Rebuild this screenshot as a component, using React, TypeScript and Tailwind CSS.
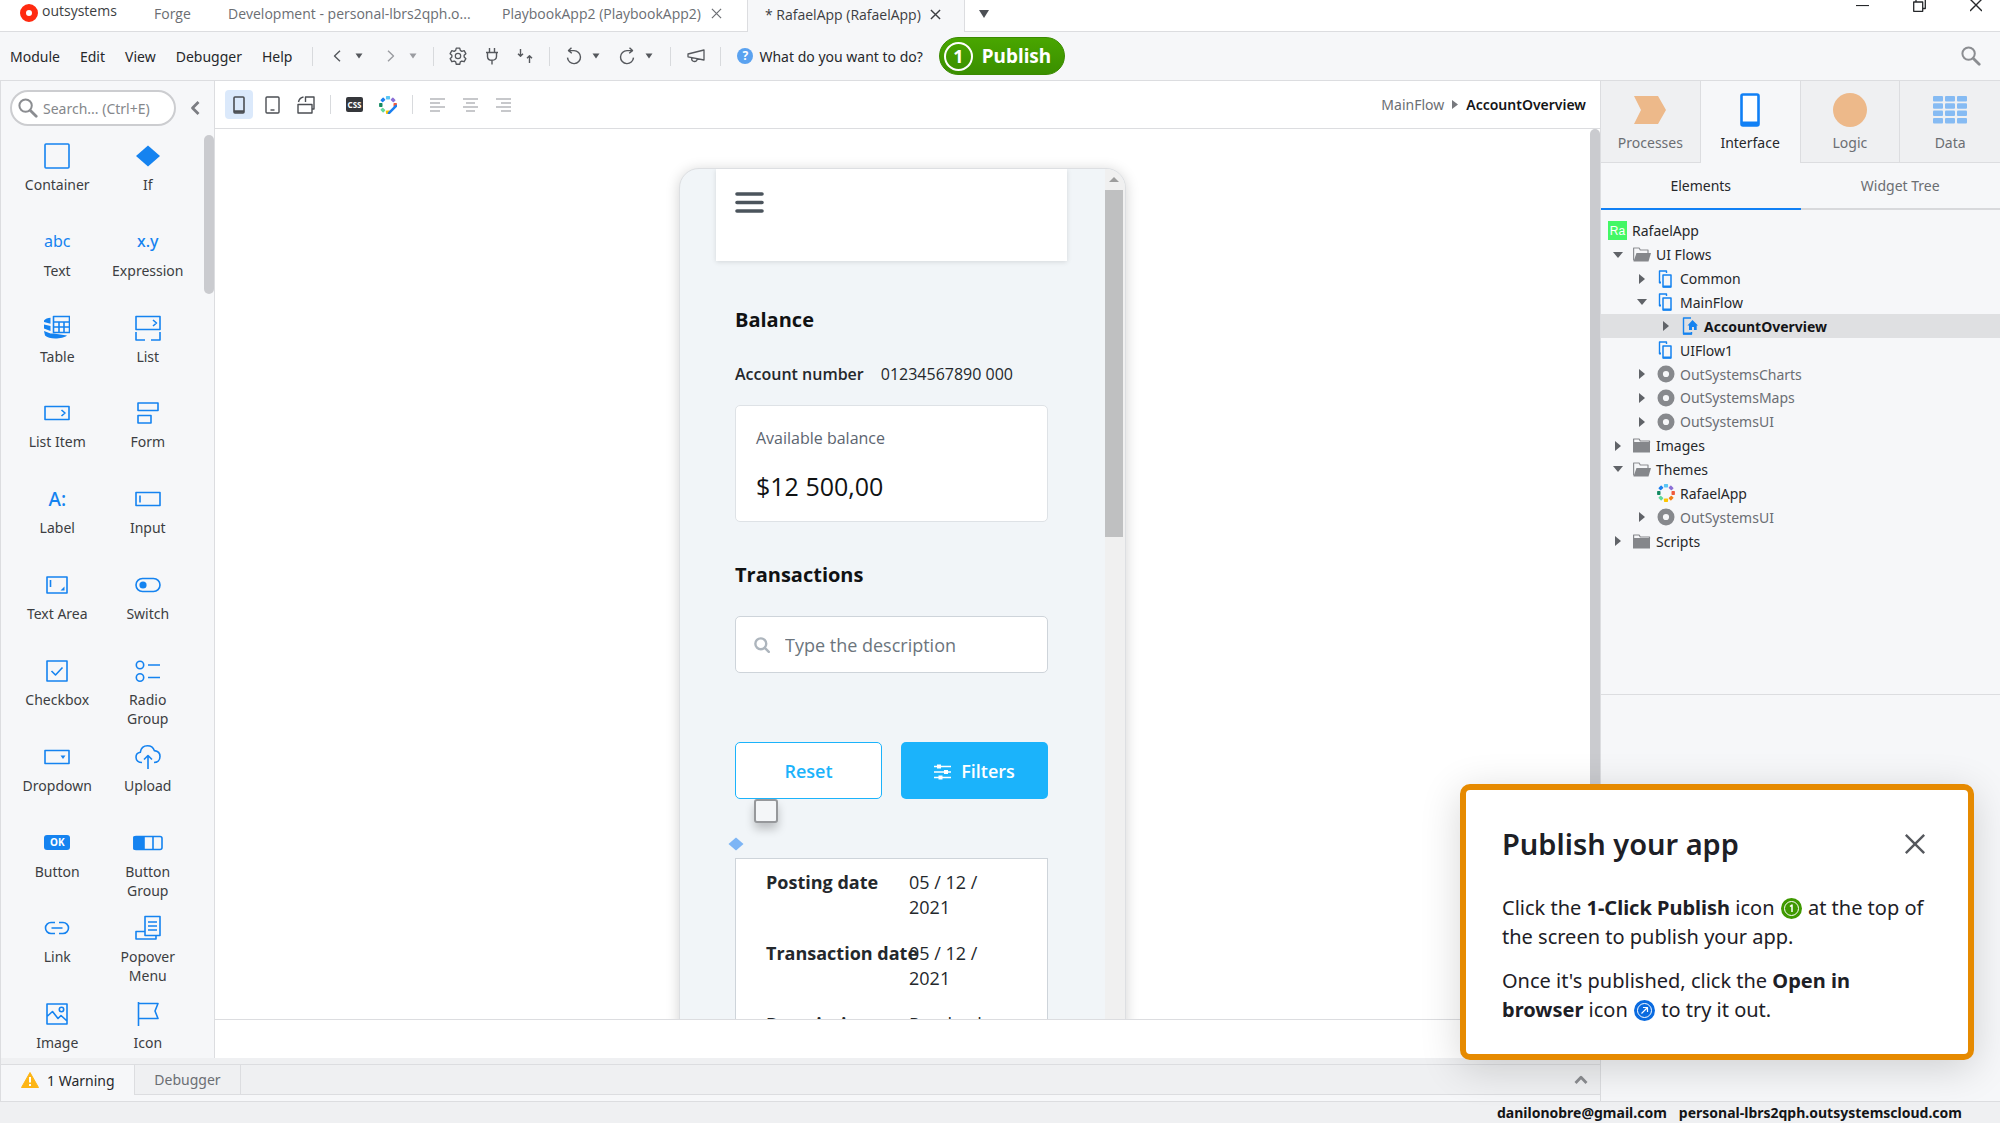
import type { ReactNode } from "react";

const BLUE = "#1583f0";

function Svg({
  w = 26,
  h = 26,
  box,
  className,
  children,
}: {
  w?: number;
  h?: number;
  box?: string;
  className?: string;
  children: ReactNode;
}) {
  return (
    <svg
      width={w}
      height={h}
      viewBox={box ?? `0 0 ${w} ${h}`}
      fill="none"
      stroke="currentColor"
      strokeWidth="1.6"
      strokeLinejoin="round"
      aria-hidden="true"
      className={className ? `shrink-0 ${className}` : "shrink-0"}
    >
      {children}
    </svg>
  );
}

/* ---------- small shared glyphs ---------- */

const Cross = ({ size, stroke }: { size: number; stroke: number }) => (
  <Svg w={size} h={size} box="0 0 12 12">
    <path d="M1 1l10 10M11 1L1 11" strokeWidth={stroke} vectorEffect="non-scaling-stroke" />
  </Svg>
);

const CaretDown = ({ className }: { className?: string }) => (
  <Svg w={8} h={6} className={className}>
    <path d="M.5 .5h7L4 5.5z" fill="currentColor" stroke="none" />
  </Svg>
);

const Magnifier = ({ size = 20 }: { size?: number }) => (
  <Svg w={size} h={size} box="0 0 20 20">
    <circle cx="7.6" cy="7.6" r="6.2" strokeWidth="2" />
    <path d="M12.4 12.4l5.8 5.8" strokeWidth="2.8" strokeLinecap="round" />
  </Svg>
);

const Divider = ({ className = "" }: { className?: string }) => (
  <span className={`h-[19px] w-px shrink-0 bg-[#d8dadd] ${className}`} />
);

const ringColors = ["#59c6f5", "#8b6fd6", "#ef5a3c", "#f08018", "#fdc500", "#62d99b", "#128a62", "#1a7ff0"];

function ThemeRing({ size = 18, brush = false }: { size?: number; brush?: boolean }) {
  const shown = brush ? ringColors.filter((_, i) => i !== 3) : ringColors;
  return (
    <Svg w={size} h={size} box="0 0 20 20">
      {shown.map((c) => {
        const a = (ringColors.indexOf(c) * Math.PI) / 4 - Math.PI / 2;
        return (
          <rect
            key={c}
            x={-2.3}
            y={-1.9}
            width="4.6"
            height="3.8"
            rx="0.8"
            fill={c}
            stroke="none"
            transform={`translate(${10 + 8 * Math.cos(a)} ${10 + 8 * Math.sin(a)}) rotate(${(a * 180) / Math.PI + 90})`}
          />
        );
      })}
      {brush && <path d="M11 19l8-8" stroke="#1a7ff0" strokeWidth="2.8" strokeLinecap="round" />}
    </Svg>
  );
}

/* ---------- title bar ---------- */

function TitleBar() {
  return (
    <header className="flex h-8 shrink-0 items-stretch whitespace-nowrap bg-white font-['Open_Sans'] text-[14px] text-[#6b6e73]">
      <div className="flex min-w-[747px] shrink-0 items-center border-b border-[#dcdde0] pb-1 pl-5">
        <Svg w={18} h={18} className="mb-0.5">
          <circle cx="9" cy="9" r="6" stroke="#ff2a10" strokeWidth="6" />
        </Svg>
        <span className="mb-1.5 ml-1 w-[112px] font-medium text-[#3c3e42]">outsystems</span>
        <button className="w-[74px] text-left">Forge</button>
        <button className="w-[274px] text-left">Development - personal-lbrs2qph.o...</button>
        <button className="w-[209px] text-left">PlaybookApp2 (PlaybookApp2)</button>
        <button aria-label="Close PlaybookApp2">
          <Cross size={11} stroke={1.2} />
        </button>
      </div>
      <div className="flex w-[218px] shrink-0 items-center border-x border-[#dcdde0] bg-[#f6f7f9] pb-1 pl-[17px] text-[#3c3e42]">
        <button className="w-[165px] text-left">* RafaelApp (RafaelApp)</button>
        <button aria-label="Close RafaelApp">
          <Cross size={11} stroke={1.4} />
        </button>
      </div>
      <div className="flex flex-1 items-center border-b border-[#dcdde0] pb-1 pl-[14px]">
        <button aria-label="More tabs" className="text-[#4c4f54]">
          <Svg w={10} h={8}>
            <path d="M0 0h10L5 8z" fill="currentColor" stroke="none" />
          </Svg>
        </button>
        <div className="ml-auto flex items-start gap-11 self-start pr-[18px] text-[#26282b]">
          <button aria-label="Minimize" className="pt-[5px]">
            <Svg w={13} h={2}>
              <path d="M0 .5h13" strokeWidth="1.2" />
            </Svg>
          </button>
          <button aria-label="Restore">
            <Svg w={13} h={12}>
              <path d="M.7 2h9v9.300h-9zM3 2V0M12.300 0v8.500h-2.500" strokeWidth="1.3" />
            </Svg>
          </button>
          <button aria-label="Close">
            <Svg w={12} h={12}>
              <path d="M0-1l12 12M12-1L0 11" strokeWidth="1.4" />
            </Svg>
          </button>
        </div>
      </div>
    </header>
  );
}

/* ---------- menu bar ---------- */

function MenuBar() {
  return (
    <nav className="flex h-[49px] shrink-0 items-center border-b border-[#dcdde0] bg-[#f6f7f9] pl-[10px] pr-[19px] text-[14px] text-[#26282b]">
      <div className="flex gap-5">
        {["Module", "Edit", "View", "Debugger", "Help"].map((m) => (
          <button key={m}>{m}</button>
        ))}
      </div>
      <Divider className="ml-5" />
      <div className="flex items-center pl-5 text-[#55585d]">
        <button aria-label="Back" className="flex items-center gap-[14px]">
          <Svg w={8} h={12}>
            <path d="M7 .8L1.500 6 7 11.200" strokeWidth="1.400" />
          </Svg>
          <CaretDown />
        </button>
        <button aria-label="Forward" className="ml-6 flex items-center gap-[14px] text-[#9a9ca1]">
          <Svg w={8} h={12}>
            <path d="M1 .8L6.500 6 1 11.200" strokeWidth="1.400" />
          </Svg>
          <CaretDown />
        </button>
      </div>
      <Divider className="ml-4" />
      <div className="flex items-center gap-[19px] pl-[15px] text-[#55585d]">
        <button aria-label="Settings">
          <Svg w={18} h={18} box="0 0 24 24">
            <circle cx="12" cy="12" r="3.600" />
            <path
              d="M9.700 1.500h4.600l.8 3.100 2 1.200 3.100-.9 2.300 4-2.300 2.200v2.300l2.300 2.200-2.300 4-3.100-.9-2 1.200-.8 3.100H9.700l-.8-3.100-2-1.200-3.100.9-2.300-4 2.300-2.200v-2.300L1.500 8.900l2.300-4 3.100.9 2-1.200z"
              strokeWidth="1.800"
            />
          </Svg>
        </button>
        <button aria-label="Manage dependencies">
          <Svg w={12} h={18}>
            <path d="M0 5.500h12M1.500 5.500v4c0 2.400 1.700 3.800 4.500 3.800s4.500-1.400 4.500-3.800v-4M3.500 5V1M8.500 5V1M6 13.500V17.500" strokeWidth="1.400" />
          </Svg>
        </button>
        <button aria-label="Merge">
          <Svg w={16} h={16}>
            <path d="M3.500 1v7M1 5.800l2.500 2.500L6 5.800M12.500 15V8M10 10.300l2.500-2.500L15 10.300" strokeWidth="1.400" />
          </Svg>
        </button>
      </div>
      <Divider className="ml-4" />
      <div className="flex items-center pl-4 text-[#55585d]">
        <button aria-label="Undo" className="flex items-center gap-[10px]">
          <Svg w={16} h={18}>
            <path d="M5.500 .8L2.500 3.600l3.300 2.600M2.800 3.600H8a6.500 6.500 0 1 1-6.500 7" strokeWidth="1.400" />
          </Svg>
          <CaretDown />
        </button>
        <button aria-label="Redo" className="ml-[19px] flex items-center gap-[10px]">
          <Svg w={16} h={18}>
            <path d="M10.500 .8l3 2.800-3.300 2.600M13.200 3.600H8a6.500 6.500 0 1 0 6.500 7" strokeWidth="1.400" />
          </Svg>
          <CaretDown />
        </button>
      </div>
      <Divider className="ml-[17px]" />
      <button aria-label="Feedback" className="ml-4 text-[#55585d]">
        <Svg w={18} h={14}>
          <path d="M17 1v10L1 7.800V5zM4.500 8.500c0 2.500 1 4 3 4 1.600 0 2.600-.8 2.800-2.800" strokeWidth="1.300" />
        </Svg>
      </button>
      <Divider className="ml-[15px]" />
      <button className="ml-4 flex items-center gap-[6px]">
        <span className="flex size-4 items-center justify-center rounded-full bg-[#5aa2f0] text-[12px] font-bold leading-none text-white">?</span>
        What do you want to do?
      </button>
      <button className="ml-4 flex h-[38px] items-center gap-[9px] rounded-full border border-[#3a8a00] bg-linear-to-b from-[#49a600] to-[#3a8f00] pl-1 pr-[13px] text-[19px] font-bold text-white">
        <span className="flex size-[29px] items-center justify-center rounded-full border-2 border-white text-[18px] leading-none">1</span>
        Publish
      </button>
      <button aria-label="Find" className="ml-auto text-[#8b8d91]">
        <Magnifier />
      </button>
    </nav>
  );
}

/* ---------- widget palette ---------- */

const widgets: { label: string; icon: ReactNode }[] = [
  { label: "Container", icon: <Svg><rect x="1" y="1" width="24" height="24" rx="1" /></Svg> },
  { label: "If", icon: <Svg><path d="M13 2.500l12 10.500-12 10.500L1 13z" fill={BLUE} stroke="none" /></Svg> },
  { label: "Text", icon: <span className="text-[16px]">abc</span> },
  { label: "Expression", icon: <span className="text-[16px] font-medium">x.y</span> },
  {
    label: "Table",
    icon: (
      <Svg>
        <path d="M9.500 1.500h16v16h-16zM9.500 7h16M9.500 12h16M15 7v10M20 7v10" />
        <path d="M0 5.500C1 4 4 3 6.500 2.800v6L0 7zM0 9.500l6.500 1.600V16L0 13.500zM0 16l6.500 2.500h3L23 20.500C19 24 5 25 1 20.500z" fill={BLUE} stroke="none" />
      </Svg>
    ),
  },
  {
    label: "List",
    icon: (
      <Svg>
        <path d="M1 1.500h24v13H1zM18 5l3.500 3L18 11M1 17v8h9M16 25h9v-8" />
      </Svg>
    ),
  },
  { label: "List Item", icon: <Svg><path d="M1 6.500h24v13H1zM17.500 10l3.500 3-3.500 3" /></Svg> },
  { label: "Form", icon: <Svg><path d="M3 3h20v7.500H3zM3 15.500h13V23H3z" /></Svg> },
  { label: "Label", icon: <span className="text-[19px] font-medium">A:</span> },
  { label: "Input", icon: <Svg><path d="M1 6.500h24v13H1zM5 9.500v7" /></Svg> },
  {
    label: "Text Area",
    icon: (
      <Svg>
        <path d="M3 5h20v16H3zM6.500 8v7" />
        <path d="M20.500 14.500v4h-4z" fill={BLUE} stroke="none" />
      </Svg>
    ),
  },
  {
    label: "Switch",
    icon: (
      <Svg>
        <rect x="1" y="6.500" width="24" height="13" rx="6.500" />
        <circle cx="8" cy="13" r="3.600" fill={BLUE} stroke="none" />
      </Svg>
    ),
  },
  { label: "Checkbox", icon: <Svg><path d="M3 3h20v20H3zM7.500 13l4 4 7-7.500" /></Svg> },
  {
    label: "Radio Group",
    icon: (
      <Svg>
        <circle cx="5" cy="7" r="3.700" />
        <circle cx="5" cy="19.500" r="3.700" />
        <path d="M13 7h12M13 19.500h12" />
      </Svg>
    ),
  },
  {
    label: "Dropdown",
    icon: (
      <Svg>
        <path d="M1 6.500h24v13H1z" />
        <path d="M16.500 11.500h5L19 15z" fill={BLUE} stroke="none" />
      </Svg>
    ),
  },
  {
    label: "Upload",
    icon: (
      <Svg>
        <path d="M7 18.500c-3.500 0-6-2.200-6-5.200 0-2.600 1.800-4.600 4.300-5C6 4 9 1.800 12.500 1.800c3.200 0 5.800 1.800 6.800 4.800 3.300.3 5.700 2.600 5.700 5.900 0 3.500-2.500 6-6 6M13 25V12M9 15.500l4-4 4 4" />
      </Svg>
    ),
  },
  {
    label: "Button",
    icon: <span className="flex h-[15px] w-[26px] items-center justify-center rounded-[3px] bg-[#1583f0] text-[10px] font-bold text-white">OK</span>,
  },
  {
    label: "Button Group",
    icon: (
      <Svg w={30} h={16}>
        <rect x="1" y="1.500" width="28" height="13" rx="2" />
        <path d="M1 2h10v12H1z" fill={BLUE} />
        <path d="M20 1.500v13" />
      </Svg>
    ),
  },
  {
    label: "Link",
    icon: (
      <Svg>
        <path d="M11 7.500H7a5.500 5.500 0 0 0 0 11h4M15 7.500h4a5.500 5.500 0 0 1 0 11h-4M7.500 13h11" />
      </Svg>
    ),
  },
  {
    label: "Popover Menu",
    icon: (
      <Svg>
        <path d="M10 1.500h15v19H10zM13 7h9M13 11h9M13 15h9M9.500 16.500H1V24h20v-3.500" />
      </Svg>
    ),
  },
  {
    label: "Image",
    icon: (
      <Svg>
        <path d="M3 3h20v20H3zM3 15.500l5.500-5 5.500 7 3-3 6 5.500" />
        <circle cx="17.500" cy="8.500" r="2.200" />
      </Svg>
    ),
  },
  { label: "Icon", icon: <Svg><path d="M3.500 1v24M3.500 2.500H23L20 10l3 7.500H3.500" /></Svg> },
];

function Palette() {
  return (
    <aside className="flex w-[215px] shrink-0 flex-col border-x border-[#dcdde0] bg-[#f6f7f9]">
      <div className="flex items-center pl-[9px] pt-[9px]">
        <label className="flex h-9 w-[166px] items-center gap-[5px] rounded-full border-2 border-[#cccdd0] bg-white pl-1.5 text-[#8b8d91]">
          <Magnifier />
          <input
            aria-label="Search widgets"
            placeholder="Search... (Ctrl+E)"
            className="w-0 flex-1 bg-transparent text-[14px] outline-none placeholder:text-[#85878b]"
          />
        </label>
        <button aria-label="Collapse toolbox" className="ml-[14px] text-[#7b7d82]">
          <Svg w={10} h={14}>
            <path d="M8.500 1L2.500 7l6 6" strokeWidth="2.800" />
          </Svg>
        </button>
      </div>
      <div className="flex min-h-0 flex-1 overflow-hidden pt-[9px]">
        <div className="grid h-[944px] flex-1 auto-rows-fr grid-cols-2 px-[11px]">
          {widgets.map((w) => (
            <button key={w.label} className="flex flex-col items-center px-2 text-[14px] leading-[19px] text-[#3c3e42]">
              <span className="flex h-10 items-center pt-0.5 text-[#1583f0]">{w.icon}</span>
              {w.label}
            </button>
          ))}
        </div>
        <div className="h-[159px] w-[10px] rounded-full bg-[#cacbcf]" />
      </div>
    </aside>
  );
}

/* ---------- canvas toolbar ---------- */

function AlignIcon({ xs }: { xs: [number, number][] }) {
  return (
    <Svg w={15} h={14}>
      {xs.map(([a, b], i) => (
        <path key={i} d={`M${a} ${1 + i * 4}H${b}`} strokeWidth="1.300" />
      ))}
    </Svg>
  );
}

function CanvasToolbar() {
  return (
    <div className="flex h-12 shrink-0 items-center border-b border-[#dcdde0] bg-white pl-[10px] pr-[14px] text-[#4b4e53]">
      <button aria-label="Phone preview" className="flex h-[29px] w-[28px] items-center justify-center rounded-[4px] bg-[#dbe9fb]">
        <Svg w={12} h={18}>
          <rect x="1" y="1" width="10" height="16" rx="1" />
          <path d="M1 15.500h10" strokeWidth="2.500" />
        </Svg>
      </button>
      <button aria-label="Tablet preview" className="ml-3">
        <Svg w={15} h={18}>
          <rect x="1" y="1" width="13" height="16" rx="1" strokeWidth="1.400" />
          <path d="M5.500 14h4" strokeWidth="1.400" />
        </Svg>
      </button>
      <button aria-label="Rotate" className="ml-[17px]">
        <Svg w={18} h={18}>
          <path d="M1 8.500h14V17H1zM8.500 6V1H17v12h-2M1.500 6C2 3.500 4 1.500 6.500 1" strokeWidth="1.400" />
        </Svg>
      </button>
      <Divider className="ml-[15px]" />
      <button
        aria-label="Style sheet"
        className="ml-[15px] flex h-[15px] w-[17px] items-center justify-center rounded-[2px] bg-[#35373b] text-[8px] font-bold leading-none text-white"
      >
        CSS
      </button>
      <button aria-label="Theme editor" className="ml-4">
        <ThemeRing brush />
      </button>
      <Divider className="ml-[15px]" />
      <div className="flex gap-[18px] pl-[17px] text-[#a9abaf]">
        <button aria-label="Align left"><AlignIcon xs={[[0, 15], [0, 10], [0, 15], [0, 10]]} /></button>
        <button aria-label="Align center"><AlignIcon xs={[[0, 15], [3, 12], [0, 15], [3, 12]]} /></button>
        <button aria-label="Align right"><AlignIcon xs={[[0, 15], [5, 15], [0, 15], [5, 15]]} /></button>
      </div>
      <div className="ml-auto flex items-center gap-2 text-[14px]">
        <a href="#mainflow" className="text-[#6b6e73]">MainFlow</a>
        <Svg w={6} h={9} className="text-[#77797e]">
          <path d="M0 0l6 4.500L0 9z" fill="currentColor" stroke="none" />
        </Svg>
        <span className="font-semibold text-[#141517]">AccountOverview</span>
      </div>
    </div>
  );
}

/* ---------- phone preview ---------- */

const details = [
  ["Posting date", "05 / 12 / 2021"],
  ["Transaction date", "05 / 12 / 2021"],
  ["Description", "Paycheck"],
];

function Phone() {
  return (
    <div className="flex h-[1100px] w-[447px] shrink-0 overflow-hidden rounded-[20px] border border-[#dddfe2] bg-[#f1f5f8] font-['Open_Sans'] text-[#24282c] shadow-[0_2px_14px_rgba(0,0,0,0.18)]">
      <div className="flex-1 pl-9 pr-[38px]">
        <div className="h-[92px] bg-white px-[19px] pt-[22px] text-[#4b545c] shadow-[0_1px_5px_rgba(0,0,0,0.12)]">
          <button aria-label="Menu">
            <Svg w={29} h={24}>
              <path d="M2 3h25M2 11.500h25M2 20h25" strokeWidth="3.600" strokeLinecap="round" />
            </Svg>
          </button>
        </div>
        <div className="px-[19px]">
          <h2 className="mt-[45px] text-[20px] font-bold leading-7 text-[#101213]">Balance</h2>
          <div className="mt-7 flex gap-[17px] text-[16px] leading-6">
            <span className="font-semibold">Account number</span>
            <span>01234567890 000</span>
          </div>
          <div className="mt-[19px] rounded-[5px] border border-[#dee2e6] bg-white px-5 pb-[14px] pt-5">
            <p className="text-[16px] leading-6 text-[#5c6570]">Available balance</p>
            <p className="mt-[15px] text-[25px] font-medium leading-[42px] text-[#101213]">$12 500,00</p>
          </div>
          <h2 className="mt-[39px] text-[20px] font-bold leading-7 text-[#101213]">Transactions</h2>
          <label className="mt-[27px] flex h-[57px] items-center gap-[15px] rounded-[5px] border border-[#ced4da] bg-white pl-[18px] text-[#adb5bd]">
            <Svg w={16} h={16} box="0 0 20 20">
              <circle cx="8.500" cy="8.500" r="6.800" strokeWidth="3" />
              <path d="M13.500 13.500l5 5" strokeWidth="3" strokeLinecap="round" />
            </Svg>
            <input
              aria-label="Description"
              placeholder="Type the description"
              className="w-0 flex-1 bg-transparent pt-0.5 text-[18px] outline-none placeholder:text-[#6c757d]"
            />
          </label>
          <div className="mt-[69px] grid h-[57px] grid-cols-2 gap-[19px] text-[18px] font-semibold">
            <button className="rounded-[5px] border border-[#1bb3fb] bg-white pt-0.5 text-[#1bb3fb]">Reset</button>
            <button className="flex items-center justify-center gap-[10px] rounded-[5px] bg-[#1bb3fb] pt-0.5 text-white">
              <Svg w={17} h={16}>
                <path d="M0 2.500h17M0 8h17M0 13.500h17" strokeWidth="1.500" />
                <path d="M3 .5h4v4H3zM10 6h4v4h-4zM4.500 11.500h4v4h-4z" fill="currentColor" stroke="none" />
              </Svg>
              Filters
            </button>
          </div>
          <input
            type="checkbox"
            aria-label="Select all"
            className="ml-[19px] block size-6 appearance-none rounded-[3px] border-2 border-[#96989b] bg-[#f4f6f8] shadow-[0_6px_10px_rgba(0,0,0,0.22)]"
          />
          <Svg w={16} h={14} className="-ml-[7px] mt-[14px]">
            <path d="M8 .5l7.500 6.500L8 13.500.5 7z" fill="#7db5f5" stroke="none" />
          </Svg>
          <dl className="mt-[7px] h-80 border border-[#ced4da] bg-white pl-[30px] pt-[11px] text-[18px] leading-[25px]">
            {details.map(([k, v]) => (
              <div key={k} className="mb-[21px] flex">
                <dt className="w-[143px] shrink-0 whitespace-nowrap font-bold">{k}</dt>
                <dd className="w-[90px]">{v}</dd>
              </div>
            ))}
          </dl>
        </div>
      </div>
      <div className="flex w-[20px] flex-col bg-[#f0f0f0] pr-0.5 text-[#9d9d9d]">
        <span className="flex h-[21px] items-center justify-center">
          <Svg w={10} h={5}>
            <path d="M5 0l5 5H0z" fill="currentColor" stroke="none" />
          </Svg>
        </span>
        <span className="h-[347px] w-full bg-[#bfc0c1]" />
      </div>
    </div>
  );
}

/* ---------- right panel ---------- */

const layers: { label: string; icon: ReactNode }[] = [
  {
    label: "Processes",
    icon: (
      <Svg w={34} h={34}>
        <path d="M1 3h24l8 14-8 14H1l7-14z" fill="#edb98a" stroke="none" />
      </Svg>
    ),
  },
  {
    label: "Interface",
    icon: (
      <Svg w={20} h={34} className="text-[#1180f5]">
        <rect x="1.500" y="1.500" width="17" height="31" rx="1.500" strokeWidth="2.600" fill="#fff" />
        <path d="M1 30.500h18" strokeWidth="4" />
      </Svg>
    ),
  },
  {
    label: "Logic",
    icon: (
      <Svg w={34} h={34}>
        <circle cx="17" cy="17" r="17" fill="#edb98a" stroke="none" />
      </Svg>
    ),
  },
  {
    label: "Data",
    icon: (
      <Svg w={34} h={28}>
        {[0, 1, 2, 3].map((r) =>
          [0, 1, 2].map((c) => <rect key={`${r}${c}`} x={c * 12} y={r * 7.3} width="10" height="5.500" rx="1" fill="#86bbf3" stroke="none" />),
        )}
      </Svg>
    ),
  },
];

function FolderIcon({ open }: { open?: boolean }) {
  return (
    <Svg w={18} h={15}>
      {open ? (
        <>
          <path d="M.6 13.500V1h5.500l1.200 2H15v3" stroke="#8d8f93" strokeWidth="1.200" />
          <path d="M3.500 6H18l-2.500 8.500H.5z" fill="#85878b" stroke="none" />
        </>
      ) : (
        <>
          <path d="M.6 4V1h5.500l1.200 2H16.500v2" stroke="#85878b" strokeWidth="1.200" />
          <path d="M0 4h17v10.500H0z" fill="#85878b" stroke="none" />
        </>
      )}
    </Svg>
  );
}

const FlowIcon = () => (
  <Svg w={18} h={18} className="text-[#1583f0]">
    <path d="M2.500 13V1h7v2" strokeWidth="1.400" />
    <rect x="6" y="5" width="8" height="12" strokeWidth="1.500" />
    <path d="M6 16.500h8M2 12.500h2" strokeWidth="2" />
  </Svg>
);

const ScreenIcon = () => (
  <Svg w={18} h={18} className="text-[#1583f0]">
    <path d="M10 1H2.500v16h8v-2" strokeWidth="1.400" />
    <path d="M2 16.500h9" strokeWidth="2" />
    <path d="M11.500 3l5.500 5.500h-1.300V13h-2.700v-3h-2v3H8V8.500H6.500z" fill="currentColor" stroke="none" />
  </Svg>
);

const ModuleIcon = () => (
  <Svg w={18} h={18}>
    <circle cx="9" cy="9" r="5.800" stroke="#87898d" strokeWidth="5.400" />
  </Svg>
);

type Row = {
  label: string;
  depth: number;
  arrow?: "open" | "closed";
  icon: ReactNode;
  muted?: boolean;
  selected?: boolean;
};

const tree: Row[] = [
  { label: "UI Flows", depth: 0, arrow: "open", icon: <FolderIcon open /> },
  { label: "Common", depth: 1, arrow: "closed", icon: <FlowIcon /> },
  { label: "MainFlow", depth: 1, arrow: "open", icon: <FlowIcon /> },
  { label: "AccountOverview", depth: 2, arrow: "closed", icon: <ScreenIcon />, selected: true },
  { label: "UIFlow1", depth: 1, icon: <FlowIcon /> },
  { label: "OutSystemsCharts", depth: 1, arrow: "closed", icon: <ModuleIcon />, muted: true },
  { label: "OutSystemsMaps", depth: 1, arrow: "closed", icon: <ModuleIcon />, muted: true },
  { label: "OutSystemsUI", depth: 1, arrow: "closed", icon: <ModuleIcon />, muted: true },
  { label: "Images", depth: 0, arrow: "closed", icon: <FolderIcon /> },
  { label: "Themes", depth: 0, arrow: "open", icon: <FolderIcon open /> },
  { label: "RafaelApp", depth: 1, icon: <ThemeRing /> },
  { label: "OutSystemsUI", depth: 1, arrow: "closed", icon: <ModuleIcon />, muted: true },
  { label: "Scripts", depth: 0, arrow: "closed", icon: <FolderIcon /> },
];

const indents = ["pl-3", "pl-9", "pl-[60px]"];

function TreeRow({ row }: { row: Row }) {
  return (
    <li className={row.selected ? "flex bg-[#dfe0e2]" : "flex"}>
      <button
        className={`flex flex-1 items-center text-[14px] ${indents[row.depth]} ${
          row.selected ? "font-bold text-[#141517]" : row.muted ? "text-[#6b6e73]" : "text-[#26282b]"
        }`}
      >
        <span className="flex w-5 text-[#606368]">
          {row.arrow === "open" && (
            <Svg w={10} h={6}>
              <path d="M0 0h10L5 6z" fill="currentColor" stroke="none" />
            </Svg>
          )}
          {row.arrow === "closed" && (
            <Svg w={8} h={10} className="ml-0.5">
              <path d="M0 0l6 5-6 5z" fill="currentColor" stroke="none" />
            </Svg>
          )}
        </span>
        {row.icon}
        <span className="ml-[5px]">{row.label}</span>
      </button>
    </li>
  );
}

function SidePanel() {
  return (
    <aside className="flex w-[400px] shrink-0 flex-col border-l border-[#dcdde0] bg-[#f6f7f9]">
      <div className="grid h-[82px] grid-cols-4 text-[14px]">
        {layers.map((l) => {
          const on = l.label === "Interface";
          return (
            <button
              key={l.label}
              className={
                on
                  ? "flex flex-col items-center border-r border-[#dcdde0] pt-[10px] text-[#26282b]"
                  : "flex flex-col items-center border-b border-r border-[#dcdde0] bg-[#eff0f2] pt-[10px] text-[#6b6e73] last:border-r-0"
              }
            >
              <span className="flex h-[37px] items-center">{l.icon}</span>
              <span className="mt-[5px] leading-5">{l.label}</span>
            </button>
          );
        })}
      </div>
      <div className="grid h-[47px] grid-cols-2 text-[14px]">
        <button className="border-b-2 border-[#1180f5] text-[#26282b]">Elements</button>
        <button className="border-b-2 border-[#d8d9dc] text-[#6b6e73]">Widget Tree</button>
      </div>
      <ul className="mt-[9px] grid h-[334px] auto-rows-fr">
        <li className="flex items-center gap-[5px] pl-[7px] text-[14px] text-[#26282b]">
          <span className="flex size-[19px] items-center justify-center bg-[#43f765] font-['Liberation_Sans'] text-[12px] text-white">Ra</span>
          RafaelApp
        </li>
        {tree.map((r, i) => (
          <TreeRow key={i} row={r} />
        ))}
      </ul>
      <div className="mt-[141px] border-t border-[#dcdde0]" />
    </aside>
  );
}

/* ---------- bottom panel ---------- */

function BottomPanel() {
  return (
    <div className="flex h-[43px] shrink-0 flex-col border-l border-[#dcdde0] bg-[#f6f7f9]">
      <div className="h-[6px] bg-[#eff0f2]" />
      <div className="flex h-[31px] items-stretch border-t border-[#dcdde0] bg-[#eff0f2] text-[14px]">
        <button className="flex w-[134px] items-center gap-2 border-r border-[#dcdde0] bg-[#f6f7f9] pl-5 text-[#26282b]">
          <Svg w={18} h={16}>
            <path d="M9 .5L17.500 15.500H.5z" fill="#fdb515" stroke="#fdb515" strokeWidth="1" />
            <path d="M9 5v5.500M9 12v2" stroke="#fff" strokeWidth="2" />
          </Svg>
          1 Warning
        </button>
        <button className="w-[106px] border-b border-r border-[#dcdde0] text-[#6b6e73]">Debugger</button>
        <div className="flex flex-1 items-center justify-end border-b border-[#dcdde0] pr-3 text-[#8b8d91]">
          <button aria-label="Expand panel">
            <Svg w={14} h={9}>
              <path d="M1.500 8L7 2.200 12.500 8" strokeWidth="2.800" />
            </Svg>
          </button>
        </div>
      </div>
    </div>
  );
}

/* ---------- guide popover ---------- */

function GuideCard() {
  return (
    <section
      aria-label="Publish your app"
      className="absolute bottom-[63px] right-[26px] w-[514px] rounded-[10px] border-[6px] border-[#e68a00] bg-white px-9 pb-[30px] pt-[34px] text-[#1d2026] shadow-[0_8px_40px_rgba(0,0,0,0.16)]"
    >
      <div className="flex items-center justify-between">
        <h1 className="text-[29px] font-semibold leading-10">Publish your app</h1>
        <button aria-label="Close guide" className="mr-[6px] text-[#55585d]">
          <Cross size={22} stroke={2.4} />
        </button>
      </div>
      <p className="mt-[29px] text-[20px] leading-[29px]">
        Click the <b className="font-bold">1-Click Publish</b> icon{" "}
        <Svg w={21} h={21} className="mx-px inline align-[-4px]">
          <circle cx="10.500" cy="10.500" r="10.500" fill="#3f9900" stroke="none" />
          <circle cx="10.500" cy="10.500" r="7" stroke="#fff" strokeWidth="1" />
          <path d="M9 8.500l2-1.500v7" stroke="#fff" strokeWidth="1.500" />
        </Svg>{" "}
        at the top of the screen to publish your app.
      </p>
      <p className="mt-[15px] text-[20px] leading-[29px]">
        Once it's published, click the <b className="font-bold">Open in browser</b> icon{" "}
        <Svg w={21} h={21} className="mx-px inline align-[-4px]">
          <circle cx="10.500" cy="10.500" r="10.500" fill="#0a6be0" stroke="none" />
          <circle cx="10.500" cy="10.500" r="7" stroke="#fff" strokeWidth="1" />
          <path d="M7.500 13.500l5.500-5.500M9 7.500h4.500V12" stroke="#fff" strokeWidth="1.200" />
        </Svg>{" "}
        to try it out.
      </p>
    </section>
  );
}

export default function App() {
  return (
    <div className="relative flex h-screen flex-col overflow-hidden bg-white font-['Noto_Sans',sans-serif]">
      <TitleBar />
      <MenuBar />
      <div className="flex min-h-0 flex-1">
        <div className="flex min-w-0 flex-1 flex-col">
          <div className="flex min-h-0 flex-1">
            <Palette />
            <main className="flex min-w-0 flex-1 flex-col bg-white">
              <CanvasToolbar />
              <div className="flex min-h-0 flex-1 overflow-hidden border-b border-[#dcdde0]">
                <div className="flex flex-1 items-start justify-center overflow-hidden pt-[39px]">
                  <Phone />
                </div>
                <div className="w-[10px] rounded-t-full bg-[#cacbcf]" />
              </div>
              <div className="h-[38px] shrink-0" />
            </main>
          </div>
          <BottomPanel />
        </div>
        <SidePanel />
      </div>
      <footer className="flex h-[22px] shrink-0 items-center justify-end gap-3 border-t border-[#dcdde0] bg-[#eff0f2] pr-[38px] text-[14px] font-bold text-[#141517]">
        <span>danilonobre@gmail.com</span>
        <span>personal-lbrs2qph.outsystemscloud.com</span>
      </footer>
      <GuideCard />
    </div>
  );
}
